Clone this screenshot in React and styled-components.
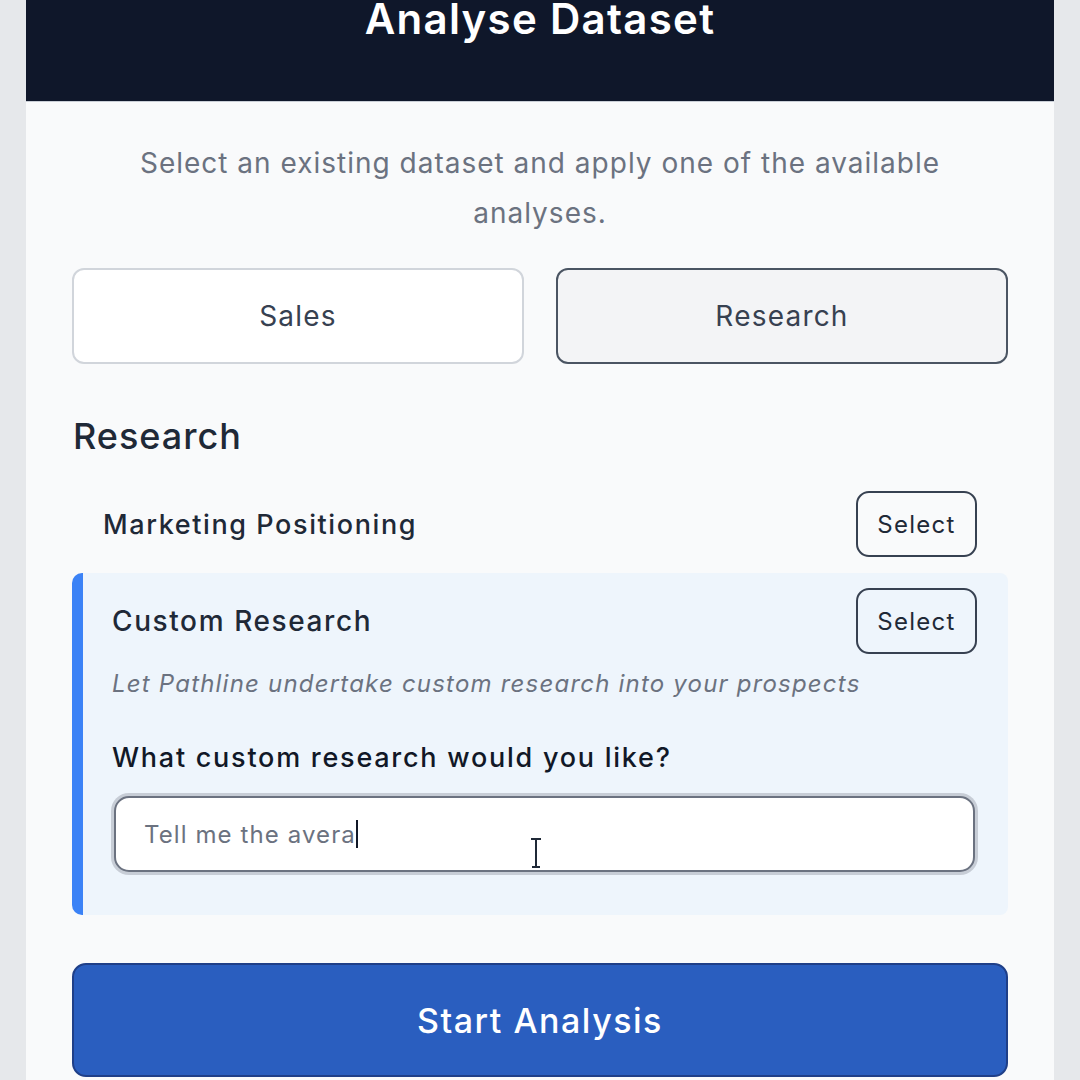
import React from "react";
import styled, { createGlobalStyle } from "styled-components";

const COLORS = {
  page: "#e6e8eb",
  body: "#f9fafb",
  navy: "#0f172a",
  text: "#1f2937",
  muted: "#6b7280",
  border: "#d1d5db",
  dark: "#4b5563",
  blue: "#3b82f6",
  cardBg: "#eef5fc",
  action: "#2a5ebf",
};

const GlobalStyle = createGlobalStyle`
  html, body, #root {
    margin: 0;
    padding: 0;
    height: 100%;
  }
  body {
    background: ${COLORS.page};
    font-family: Inter, "Noto Sans", "Liberation Sans", sans-serif;
    color: ${COLORS.text};
    overflow: hidden;
  }
  * {
    box-sizing: border-box;
  }
`;

const Page = styled.div`
  height: 1080px;
  padding: 0 26px;
`;

const Panel = styled.div`
  background: ${COLORS.body};
  height: 100%;
  display: flex;
  flex-direction: column;
`;

const Header = styled.header`
  height: 102px;
  background: ${COLORS.navy};
  border-bottom: 1px solid #c9ced6;
  display: flex;
  justify-content: center;
  align-items: flex-start;
`;

const Title = styled.h1`
  margin: -2px 0 0;
  font-size: 42px;
  line-height: 1;
  font-weight: 600;
  color: #fff;
  letter-spacing: 1.3px;
`;

const Body = styled.main`
  padding: 36px 46px 0;
  display: flex;
  flex-direction: column;
`;

const Intro = styled.p`
  margin: 0 auto;
  max-width: 860px;
  text-align: center;
  font-size: 28px;
  line-height: 50px;
  letter-spacing: 1px;
  color: ${COLORS.muted};
`;

const Tabs = styled.div`
  margin-top: 30px;
  display: grid;
  grid-template-columns: 1fr 1fr;
  gap: 32px;
`;

const Tab = styled.button`
  height: 96px;
  border-radius: 12px;
  font-family: inherit;
  font-size: 28px;
  letter-spacing: 1.2px;
  color: #374151;
  background: ${({ active }) => (active ? "#f3f4f6" : "#fff")};
  border: 2px solid ${({ active }) => (active ? COLORS.dark : COLORS.border)};
  cursor: pointer;
`;

const SectionTitle = styled.h2`
  margin: 50px 0 0 1px;
  font-size: 36px;
  line-height: 44px;
  font-weight: 500;
  letter-spacing: 1px;
  color: ${COLORS.text};
`;

const Option = styled.div`
  margin-top: ${({ selected }) => (selected ? "0" : "17px")};
  padding: ${({ selected }) => (selected ? "15px" : "16px")} 31px
    ${({ selected }) => (selected ? "43px" : "16px")}
    ${({ selected }) => (selected ? "29px" : "31px")};
  border-radius: 10px 8px 8px 10px;
  background: ${({ selected }) => (selected ? COLORS.cardBg : "transparent")};
  border-left: ${({ selected }) => (selected ? `11px solid ${COLORS.blue}` : "none")};
`;

const OptionHead = styled.div`
  display: flex;
  align-items: center;
  justify-content: space-between;
`;

const OptionName = styled.span`
  font-size: ${({ big }) => (big ? "28px" : "27px")};
  font-weight: 500;
  letter-spacing: 1.6px;
  color: ${COLORS.text};
`;

const SelectButton = styled.button`
  width: 121px;
  height: 66px;
  border-radius: 13px;
  border: 2px solid #374151;
  background: transparent;
  font-family: inherit;
  font-size: 24px;
  letter-spacing: 1.3px;
  color: ${COLORS.text};
  cursor: pointer;
`;

const Description = styled.p`
  margin: 15px 0 0;
  font-size: 24px;
  line-height: 30px;
  font-style: italic;
  letter-spacing: 1.2px;
  color: ${COLORS.muted};
`;

const Label = styled.label`
  display: block;
  margin-top: 42px;
  font-size: 27px;
  line-height: 34px;
  font-weight: 500;
  letter-spacing: 1.75px;
  color: #111827;
`;

const Field = styled.div`
  position: relative;
  margin: 21px 2px 0;
  height: 76px;
  border-radius: 15px;
  border: 2px solid #6b7280;
  box-shadow: 0 0 0 3px #c7cdd6;
  background: #fff;
  display: flex;
  align-items: center;
  padding: 0 28px;
  font-size: 24px;
  letter-spacing: 1.1px;
  color: ${COLORS.muted};
`;

const Caret = styled.span`
  display: inline-block;
  width: 2px;
  height: 28px;
  background: #111827;
`;

const Pointer = styled.svg`
  position: absolute;
  left: 414px;
  top: 40px;
`;

const StartButton = styled.button`
  margin-top: 48px;
  height: 114px;
  border-radius: 14px;
  border: 2px solid #1f3f88;
  background: ${COLORS.action};
  color: #fff;
  font-family: inherit;
  font-size: 34px;
  font-weight: 500;
  letter-spacing: 1.5px;
  cursor: pointer;
`;

export default function App() {
  return (
    <>
      <GlobalStyle />
      <Page>
        <Panel>
          <Header>
            <Title>Analyse Dataset</Title>
          </Header>
          <Body>
            <Intro>
              Select an existing dataset and apply one of the available analyses.
            </Intro>
            <Tabs>
              <Tab>Sales</Tab>
              <Tab active>Research</Tab>
            </Tabs>

            <SectionTitle>Research</SectionTitle>

            <Option>
              <OptionHead>
                <OptionName>Marketing Positioning</OptionName>
                <SelectButton>Select</SelectButton>
              </OptionHead>
            </Option>

            <Option selected>
              <OptionHead>
                <OptionName big>Custom Research</OptionName>
                <SelectButton>Select</SelectButton>
              </OptionHead>
              <Description>Let Pathline undertake custom research into your prospects</Description>
              <Label>What custom research would you like?</Label>
              <Field>
                Tell me the avera<Caret />
                <Pointer width="12" height="30" viewBox="0 0 12 30">
                  <path d="M1 1h10M6 1v28M2 29h8" stroke="#1f2937" strokeWidth="2" fill="none" />
                </Pointer>
              </Field>
            </Option>

            <StartButton>Start Analysis</StartButton>
          </Body>
        </Panel>
      </Page>
    </>
  );
}
